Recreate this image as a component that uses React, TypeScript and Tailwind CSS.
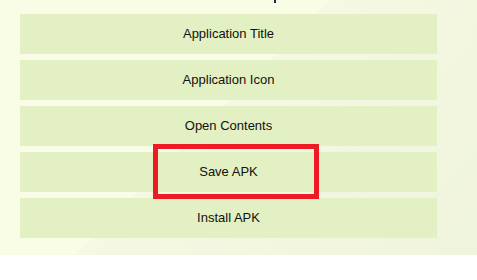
import React from "react";

const items = [
  "Application Title",
  "Application Icon",
  "Open Contents",
  "Save APK",
  "Install APK",
];

export default function App() {
  return (
    <div className="w-[477px] h-[280px] bg-white font-['Liberation_Sans',Arial,sans-serif]">
      <div className="relative flex flex-col gap-[6px] pl-[20px] pr-[40px] pb-[17px] bg-[linear-gradient(135deg,#fafde6_45%,#f5f8e2_45%,#eff4dc_100%)]">
        {/* tail of the heading that is cut off above */}
        <div className="h-[14px] -mb-[6px]">
          <div className="ml-[254px] w-[2px] h-[3px] bg-[#1a2a3a]" />
        </div>
        {items.map((label) => (
          <div
            key={label}
            className="h-[40px] flex items-center justify-center bg-[#e2f0c3] text-[13px] text-[#111]"
          >
            {label}
          </div>
        ))}
        <div className="absolute left-[153px] top-[144px] w-[166px] h-[55px] border-[5px] border-[#ed1c24]" />
      </div>
    </div>
  );
}
